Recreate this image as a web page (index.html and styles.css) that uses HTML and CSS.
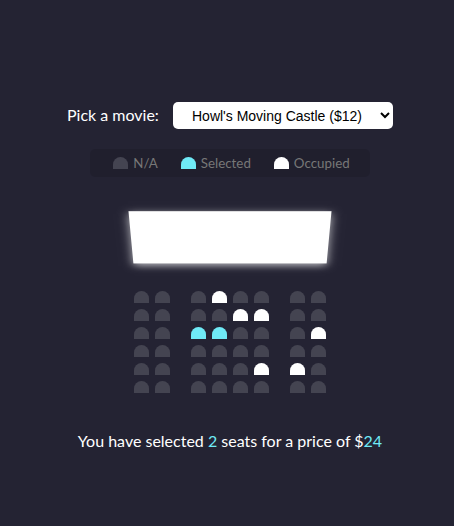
FILE: index.html
```html
<!doctype html>
<html lang="en">
<head>
  <meta charset="UTF-8">
  <meta name="viewport" content="width=device-width, initial-scale=1.0">
  <title>Movie Seat Booking</title>
  <link rel="stylesheet" href="styles.css">
</head>
<body>
  <div class="movie-container">
    <label>Pick a movie:</label>
    <select id="movie">
      <option value="10">Avengers: Endgame ($10)</option>
      <option value="12" selected>Howl's Moving Castle ($12)</option>
      <option value="8">Toy Story 4 ($8)</option>
      <option value="9">The Lion King ($9)</option>
    </select>
  </div>

  <ul class="showcase">
    <li>
      <div class="seat"></div>
      <small>N/A</small>
    </li>
    <li>
      <div class="seat selected"></div>
      <small>Selected</small>
    </li>
    <li>
      <div class="seat occupied"></div>
      <small>Occupied</small>
    </li>
  </ul>

  <div class="container">
    <div class="screen"></div>

    <div class="row">
      <div class="seat"></div>
      <div class="seat"></div>
      <div class="seat"></div>
      <div class="seat occupied"></div>
      <div class="seat"></div>
      <div class="seat"></div>
      <div class="seat"></div>
      <div class="seat"></div>
    </div>
    <div class="row">
      <div class="seat"></div>
      <div class="seat"></div>
      <div class="seat"></div>
      <div class="seat"></div>
      <div class="seat occupied"></div>
      <div class="seat occupied"></div>
      <div class="seat"></div>
      <div class="seat"></div>
    </div>
    <div class="row">
      <div class="seat"></div>
      <div class="seat"></div>
      <div class="seat selected"></div>
      <div class="seat selected"></div>
      <div class="seat"></div>
      <div class="seat"></div>
      <div class="seat"></div>
      <div class="seat occupied"></div>
    </div>
    <div class="row">
      <div class="seat"></div>
      <div class="seat"></div>
      <div class="seat"></div>
      <div class="seat"></div>
      <div class="seat"></div>
      <div class="seat"></div>
      <div class="seat"></div>
      <div class="seat"></div>
    </div>
    <div class="row">
      <div class="seat"></div>
      <div class="seat"></div>
      <div class="seat"></div>
      <div class="seat"></div>
      <div class="seat"></div>
      <div class="seat occupied"></div>
      <div class="seat occupied"></div>
      <div class="seat"></div>
    </div>
    <div class="row">
      <div class="seat"></div>
      <div class="seat"></div>
      <div class="seat"></div>
      <div class="seat"></div>
      <div class="seat"></div>
      <div class="seat"></div>
      <div class="seat"></div>
      <div class="seat"></div>
    </div>
  </div>

  <p class="text">
    You have selected <span id="count">2</span> seats for a price of $<span id="total">24</span>
  </p>
</body>
</html>
```

FILE: styles.css
```css
* {
  box-sizing: border-box;
}

body {
  background-color: #242333;
  color: #fff;
  display: flex;
  flex-direction: column;
  align-items: center;
  height: 100vh;
  margin: 0;
  padding: 82px 0 0 6px;
  font-family: 'Lato', sans-serif;
}

.movie-container {
  margin: 20px 0;
  font-size: 16px;
}

.movie-container select {
  background-color: #fff;
  border: 0;
  border-radius: 5px;
  font-family: 'Liberation Sans', Arial, sans-serif;
  font-size: 14px;
  margin-left: 10px;
  padding: 5px 15px 5px 15px;
  height: 27px;
}

.container {
  perspective: 1000px;
  margin-top: 11px;
  margin-bottom: 30px;
}

.seat {
  background-color: #444451;
  height: 12px;
  width: 15px;
  margin: 3px;
  border-top-left-radius: 10px;
  border-top-right-radius: 10px;
}

.seat.selected {
  background-color: #6feaf6;
}

.seat.occupied {
  background-color: #fff;
}

.seat:nth-of-type(2) {
  margin-right: 18px;
}

.seat:nth-last-of-type(2) {
  margin-left: 18px;
}

.showcase .seat {
  margin-right: 3px;
  margin-left: 3px;
}

.showcase {
  background: rgba(0, 0, 0, 0.1);
  padding: 5px 10px;
  border-radius: 5px;
  color: #777;
  list-style-type: none;
  display: flex;
  justify-content: space-between;
  margin: 0;
}

.showcase li {
  display: flex;
  align-items: center;
  justify-content: center;
  margin: 0 10px;
}

.showcase li small {
  margin-left: 2px;
  font-size: smaller;
}

.row {
  display: flex;
}

.screen {
  background-color: #fff;
  height: 70px;
  width: 100%;
  margin: 15px 0;
  transform: rotateX(-45deg);
  box-shadow: 0 3px 10px rgba(255, 255, 255, 0.7);
}

p.text {
  margin: 5px 0;
  font-size: 16px;
}

p.text span {
  color: #6feaf6;
}
```
